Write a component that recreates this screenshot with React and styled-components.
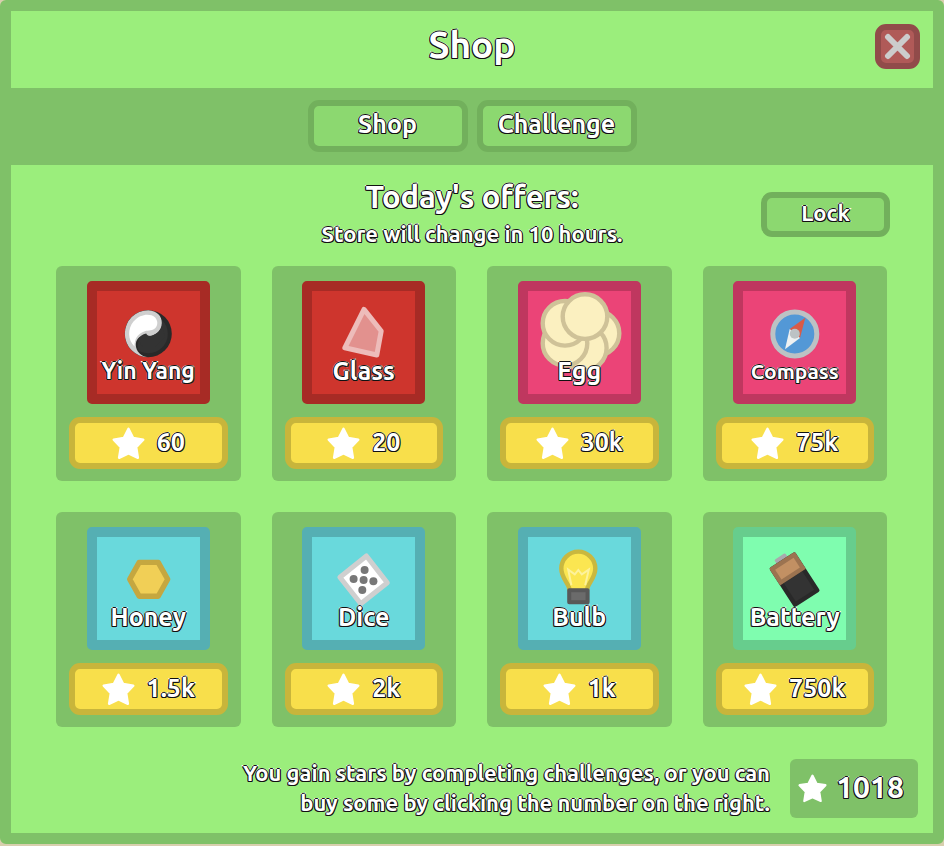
import React from "react";
import styled, { createGlobalStyle, css } from "styled-components";

const GlobalStyle = createGlobalStyle`
  *, *::before, *::after { box-sizing: border-box; }
  body {
    margin: 0;
    background: #d8cfae;
    font-family: "Ubuntu", "Noto Sans", "Open Sans", sans-serif;
    font-weight: 700;
    color: #fff;
  }
  button { font: inherit; color: inherit; cursor: pointer; padding: 0; }
  h1, h2, h3, p { margin: 0; font-weight: 700; }
`;

const outlined = css`
  color: #fff;
  -webkit-text-stroke: 2px #fff;
  paint-order: stroke fill;
  text-shadow:
    1px 0 0 #111,
    -1px 0 0 #111,
    0 1px 0 #111,
    0 -1px 0 #111,
    1px 1px 0 #111,
    -1px 1px 0 #111;
`;

const Panel = styled.main`
  border: 11px solid #7fc168;
  border-radius: 6px;
  background: #9bee7c;
  min-height: 844px;
  display: flex;
  flex-direction: column;
`;

const Header = styled.header`
  display: grid;
  grid-template-columns: 45px 1fr 45px;
  align-items: center;
  height: 77px;
  padding: 0 13px;
`;

const Title = styled.h1`
  ${outlined}
  grid-column: 2;
  text-align: center;
  font-size: 37px;
  line-height: 60px;
  padding-bottom: 10px;
`;

const CloseButton = styled.button`
  display: grid;
  place-items: center;
  width: 45px;
  height: 45px;
  border: 6px solid #914b4a;
  border-radius: 11px;
  background: #b05a58;
  margin-bottom: 6px;
`;

const Tabs = styled.nav`
  display: flex;
  justify-content: center;
  align-items: center;
  gap: 9px;
  height: 77px;
  padding-bottom: 2px;
  background: #7fc168;
`;

const GreenButton = styled.button`
  ${outlined}
  display: flex;
  align-items: center;
  justify-content: center;
  width: ${(p) => (p.$small ? 129 : 160)}px;
  height: ${(p) => (p.$small ? 45 : 52)}px;
  border: 6px solid #72b05c;
  border-radius: 11px;
  background: #8cd870;
  font-size: ${(p) => (p.$small ? 22 : 25)}px;
  line-height: 32px;
  padding-bottom: 3px;
`;

const Intro = styled.section`
  display: grid;
  grid-template-columns: 129px 1fr 129px;
  align-items: center;
  padding: 12px 43px 0;
  height: 101px;
  align-content: start;
`;

const IntroText = styled.div`
  grid-column: 2;
  text-align: center;
`;

const OffersTitle = styled.h2`
  ${outlined}
  font-size: 31px;
  line-height: 40px;
`;

const Note = styled.p`
  ${outlined}
  font-size: 22px;
  line-height: 34px;
`;

const Grid = styled.section`
  display: grid;
  grid-template-columns: repeat(4, 1fr);
  gap: 31px;
  padding: 0 46px 0 45px;
`;

const Card = styled.article`
  display: flex;
  flex-direction: column;
  align-items: center;
  gap: 13px;
  padding: 15px 13px 12px;
  border-radius: 6px;
  background: #7fc168;
`;

const Tile = styled.div`
  display: grid;
  width: 123px;
  height: 123px;
  border: 10px solid ${(p) => p.$edge};
  border-radius: 5px;
  background: ${(p) => p.$fill};

  > * { grid-area: 1 / 1; }
`;

const Art = styled.svg`
  display: block;
  width: 103px;
  height: 103px;
`;

const ItemName = styled.h3`
  ${outlined}
  align-self: end;
  justify-self: center;
  white-space: nowrap;
  font-size: ${(p) => p.$size}px;
  line-height: 28px;
  padding-bottom: 9px;
`;

const PriceButton = styled.button`
  ${outlined}
  display: flex;
  align-items: center;
  justify-content: center;
  gap: 12px;
  width: 100%;
  height: 52px;
  border: 6px solid #c8b53b;
  border-radius: 11px;
  background: #f8df4b;
  font-size: 25px;
  line-height: 36px;
`;

const Price = styled.span`
  padding-bottom: 2px;
`;

const Footer = styled.footer`
  display: flex;
  justify-content: flex-end;
  align-items: center;
  gap: 20px;
  margin-top: auto;
  padding: 0 15px 15px;
`;

const Hint = styled.p`
  ${outlined}
  max-width: 560px;
  text-align: right;
  font-size: 22px;
  line-height: 30px;
`;

const Balance = styled.button`
  ${outlined}
  display: flex;
  align-items: center;
  justify-content: center;
  gap: 9px;
  width: 128px;
  height: 59px;
  border: 0;
  border-radius: 6px;
  background: #7fc168;
  font-size: 30px;
  line-height: 40px;
  padding-right: 6px;
`;

const Star = ({ size = 33 }) => (
  <svg width={size} height={size} viewBox="0 0 33 33" aria-hidden="true">
    <path
      d="M16.5 1.8 L21.2 11 L31.3 12.7 L24.2 20.2 L25.9 30.8 L16.5 26.4 L7.1 30.8 L8.8 20.2 L1.7 12.7 L11.8 11 Z"
      fill="#fff"
      stroke="#fff"
      strokeWidth="2.4"
      strokeLinejoin="round"
    />
  </svg>
);

const YinYang = () => (
  <g>
    <circle cx="51.3" cy="42.7" r="23.5" fill="#292929" />
    <circle cx="51.3" cy="42.7" r="19.5" fill="#333" />
    <path d="M51.3 66.2 A23.5 23.5 0 0 1 51.3 19.2 A11.8 11.8 0 0 1 51.3 42.7 A11.8 11.8 0 0 0 51.3 66.2" fill="#292929" />
    <path d="M51.3 66.2 A23.5 23.5 0 0 1 51.3 19.2 C60 19.6 65 25 64.8 32 C64.5 39.5 59 45 51.5 44.9 C44 42.8 38.6 47.5 38.8 54 C39 60.5 44 65.5 51.3 66.2 Z" fill="#cfcfcf" />
    <path d="M37.5 55.5 C30.5 49 30.6 37.5 36.5 30.5 C42 24 49.5 22.6 54.5 24.3 C60.6 26.5 61.9 33 58.6 36.8 C55.8 39.8 51.5 39.3 47.8 40.2 C41 42.2 37.3 47.8 37.5 55.5 Z" fill="#fff" />
    <path d="M49.2 42.5 C50 45 53 45.4 55.4 44.4 C60.5 42.6 63.5 39.5 65 35.3 L68 46 L58 56 L46 56 L41 49 C43 45 45.5 43 49.2 42.5 Z" fill="#333" />
  </g>
);

const Glass = () => (
  <path d="M52 18.4 L69.2 40 L64.8 64 L32.8 56.8 Z" fill="#e2918e" stroke="#edbcba" strokeWidth="5" strokeLinejoin="round" />
);

const Egg = () => (
  <g fill="#fbf0c0" stroke="#cfc298" strokeWidth="4.4">
    <circle cx="69" cy="42.3" r="22.3" />
    <circle cx="56.3" cy="57" r="22.3" />
    <circle cx="37" cy="52.3" r="22.3" />
    <circle cx="37" cy="32.3" r="22.3" />
    <circle cx="57" cy="25.6" r="22.3" />
  </g>
);

const Compass = () => (
  <g>
    <circle cx="51.8" cy="43" r="22" fill="#5398d6" stroke="#bcc2c4" strokeWidth="5" />
    <path d="M62.3 26.7 L57 47 L46.7 38 Z" fill="#d95b47" />
    <path d="M42 58.3 L46.7 38 L57 47 Z" fill="#eef1f2" />
    <circle cx="51.8" cy="42.8" r="5" fill="#bcc2c4" />
  </g>
);

const Honey = () => (
  <path d="M42.2 25.4 H61.2 L70.7 42.3 L61.2 59.2 H42.2 L32.7 42.3 Z" fill="#f1cf56" stroke="#c5a740" strokeWidth="5.4" strokeLinejoin="round" />
);

const Dice = () => (
  <g transform="translate(0.6 0.6)">
    <path d="M53.8 18.4 L74.7 45.2 L48.2 66.2 L27.3 39.6 Z" fill="#fff" stroke="#cfcfcf" strokeWidth="5" strokeLinejoin="round" />
    <g fill="#777">
      <circle cx="52" cy="32.3" r="4" />
      <circle cx="41" cy="41.3" r="4" />
      <circle cx="51" cy="42.3" r="4" />
      <circle cx="60.8" cy="43.6" r="4" />
      <circle cx="49.7" cy="52.3" r="4" />
    </g>
  </g>
);

const Bulb = () => (
  <g>
    <path d="M42 54 L40.8 50 C39 45 33.3 40 33.3 31.6 A17 17 0 0 1 67.3 31.6 C67.3 40 61.6 45 59.8 50 L58.6 54 Z" fill="#fbe651" stroke="#c9b83f" strokeWidth="4.4" />
    <path d="M43.4 48.3 L40.2 32.6 L46.8 37.4 L50.3 33 L53.8 37.4 L60.8 32.6 L57.2 48.3" fill="none" stroke="#fdf29b" strokeWidth="2" />
    <rect x="41.2" y="53.2" width="18.4" height="12" fill="#6b6b6b" stroke="#585858" strokeWidth="4" strokeLinejoin="round" />
  </g>
);

const Battery = () => (
  <g transform="translate(51.6 42.6) rotate(-33)">
    <rect x="-6.5" y="-27.5" width="13" height="6" rx="1.5" fill="#a9a9ad" />
    <rect x="-15.4" y="-23.4" width="30.8" height="46.8" rx="2" fill="#292929" />
    <rect x="-11" y="-2.9" width="22" height="22" fill="#333" />
    <path d="M-15.4 -3 V-21.4 A2 2 0 0 1 -13.4 -23.4 H13.4 A2 2 0 0 1 15.4 -21.4 V-3 Z" fill="#9c7350" />
    <rect x="-11" y="-18.8" width="22" height="11.6" fill="#c29063" />
  </g>
);

const RED = { fill: "#ce352d", edge: "#a72b25" };
const PINK = { fill: "#eb4477", edge: "#bf375f" };
const TEAL = { fill: "#69d9dc", edge: "#55afb3" };
const MINT = { fill: "#7ffdaf", edge: "#67cd8d" };

const OFFERS = [
  { name: "Yin Yang", price: "60", tone: RED, Icon: YinYang, size: 23 },
  { name: "Glass", price: "20", tone: RED, Icon: Glass, size: 25 },
  { name: "Egg", price: "30k", tone: PINK, Icon: Egg, size: 25 },
  { name: "Compass", price: "75k", tone: PINK, Icon: Compass, size: 21 },
  { name: "Honey", price: "1.5k", tone: TEAL, Icon: Honey, size: 25 },
  { name: "Dice", price: "2k", tone: TEAL, Icon: Dice, size: 25 },
  { name: "Bulb", price: "1k", tone: TEAL, Icon: Bulb, size: 25 },
  { name: "Battery", price: "750k", tone: MINT, Icon: Battery, size: 25 },
];

const Offer = ({ name, price, tone, Icon, size }) => (
  <Card>
    <Tile $fill={tone.fill} $edge={tone.edge}>
      <Art viewBox="0 0 103 103" aria-hidden="true">
        <Icon />
      </Art>
      <ItemName $size={size}>{name}</ItemName>
    </Tile>
    <PriceButton type="button">
      <Star />
      <Price>{price}</Price>
    </PriceButton>
  </Card>
);

export default function App() {
  return (
    <>
      <GlobalStyle />
      <Panel>
        <Header>
          <Title>Shop</Title>
          <CloseButton type="button" aria-label="Close">
            <svg width="27" height="27" viewBox="0 0 27 27" aria-hidden="true">
              <path d="M4 4 L23 23 M23 4 L4 23" stroke="#ccc" strokeWidth="6" strokeLinecap="round" />
            </svg>
          </CloseButton>
        </Header>
        <Tabs>
          <GreenButton type="button">Shop</GreenButton>
          <GreenButton type="button">Challenge</GreenButton>
        </Tabs>
        <Intro>
          <IntroText>
            <OffersTitle>Today's offers:</OffersTitle>
            <Note>Store will change in 10 hours.</Note>
          </IntroText>
          <GreenButton type="button" $small>Lock</GreenButton>
        </Intro>
        <Grid>
          {OFFERS.map((offer) => (
            <Offer key={offer.name} {...offer} />
          ))}
        </Grid>
        <Footer>
          <Hint>
            You gain stars by completing challenges, or you can
            <br />
            buy some by clicking the number on the right.
          </Hint>
          <Balance type="button">
            <Star size={29} />
            <Price>1018</Price>
          </Balance>
        </Footer>
      </Panel>
    </>
  );
}
